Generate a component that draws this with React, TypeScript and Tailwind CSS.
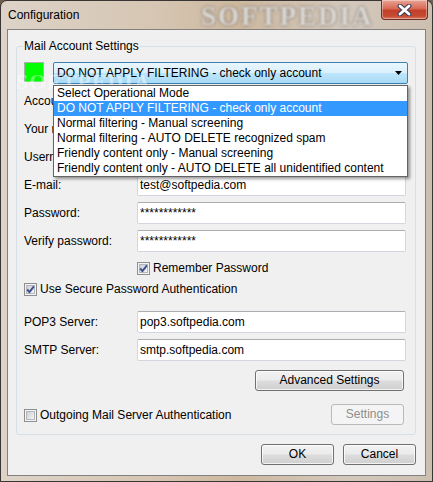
import React from "react";

const MODES = [
  "Select Operational Mode",
  "DO NOT APPLY FILTERING - check only account",
  "Normal filtering - Manual screening",
  "Normal filtering - AUTO DELETE recognized spam",
  "Friendly content only - Manual screening",
  "Friendly content only - AUTO DELETE all unidentified content",
];

const FIELDS = [
  { label: "Account name:", value: "" },
  { label: "Your name:", value: "" },
  { label: "Username:", value: "" },
  { label: "E-mail:", value: "test@softpedia.com" },
  { label: "Password:", value: "************" },
  { label: "Verify password:", value: "************" },
];

function CheckBox({ checked }: { checked?: boolean }) {
  return (
    <svg width="13" height="13" viewBox="0 0 13 13" className="shrink-0">
      <defs>
        <linearGradient id="cbfill" x1="0" y1="0" x2="1" y2="1">
          <stop offset="0" stopColor="#c9cdd3" />
          <stop offset="1" stopColor="#f6f6f6" />
        </linearGradient>
      </defs>
      <rect x="0.5" y="0.5" width="12" height="12" fill="#f4f4f4" stroke="#8e8f8f" />
      <rect x="2.5" y="2.5" width="8" height="8" fill="url(#cbfill)" stroke="#b3b7bd" />
      {checked && (
        <path
          d="M3.2 6.4 L5.4 9.2 L9.9 3.3"
          fill="none"
          stroke="#3c508c"
          strokeWidth="1.9"
          strokeLinejoin="round"
        />
      )}
    </svg>
  );
}

function TextBox({ value }: { value?: string }) {
  return (
    <div className="h-[22px] w-[269px] rounded-[2px] border border-[#d3d6dc] border-t-[#abadb3] bg-white pl-[2px] leading-[20px]">
      {value}
    </div>
  );
}

function Button({
  children,
  className = "",
  disabled,
}: {
  children: React.ReactNode;
  className?: string;
  disabled?: boolean;
}) {
  return (
    <div
      className={`flex h-[21px] items-center justify-center rounded-[3px] border ${
        disabled
          ? "border-[#b7bbbe] bg-[#f4f4f4] text-[#8d8d8d]"
          : "border-[#707070] bg-[linear-gradient(#f2f2f2_0%,#ebebeb_48%,#dddddd_52%,#cfcfcf_100%)] shadow-[inset_0_0_0_1px_rgba(255,255,255,0.75)]"
      } ${className}`}
    >
      {children}
    </div>
  );
}

function CloseButton() {
  return (
    <div className="absolute right-[-2px] top-[-1px] flex h-[20px] w-[47px] items-center justify-center rounded-b-[4px] border border-t-0 border-[#6a3029] bg-[linear-gradient(#e9a597_0%,#d86a53_45%,#c3402a_55%,#c64a33_85%,#dd7a5e_100%)] shadow-[inset_0_0_0_1px_rgba(255,255,255,0.35)]">
      <svg width="15" height="12" viewBox="0 0 15 12">
        <path d="M3 2 L12 10 M12 2 L3 10" stroke="#3a3f5a" strokeWidth="4.8" strokeLinecap="round" />
        <path d="M3 2 L12 10 M12 2 L3 10" stroke="#ffffff" strokeWidth="2.8" strokeLinecap="round" />
      </svg>
    </div>
  );
}

export default function App() {
  return (
    <div className="h-[482px] w-[433px] overflow-hidden bg-[#6e5d50] font-['Liberation_Sans',Arial,sans-serif] text-[12px] leading-[15px] text-black">
      <div className="flex h-full flex-col rounded-t-[7px] border border-[#3a3634] bg-[linear-gradient(to_right,#ddd3c8_0%,#d6c6b3_35%,#cdb89f_55%,#d3c8bc_80%,#cdbfb0_100%)] px-[6px] pb-[5px]">
        {/* title bar */}
        <div className="relative flex h-[28px] shrink-0 items-center pl-[1px]">
          <span className="relative z-10">Configuration</span>
          <span className="pointer-events-none absolute left-[194px] top-[1px] font-['Liberation_Serif',serif] text-[27px] font-bold leading-[28px] tracking-[2px] text-[#eeebe7]/85 blur-[1px] [text-shadow:0_0_3px_rgba(70,70,70,0.9)]">
            SOFTPEDIA
          </span>
          <CloseButton />
        </div>

        {/* client area */}
        <div className="relative flex flex-1 flex-col border border-[#83817f] bg-[#f0f0f0]">
          <fieldset className="ml-[8px] mr-[9px] mt-[9px] rounded-[3px] border border-[#d5dfe5] px-[7px] pb-[9px] pt-[8px]">
            <legend className="-ml-[1px] px-[1px] leading-[15px]">Mail Account Settings</legend>

            <div className="flex items-start gap-[9px]">
              <div className="h-[20px] w-[20px] shrink-0 border border-[#a9b0a9] border-b-[#6fe36f] border-r-[#6fe36f] bg-[#00ff00]" />
              <div className="relative">
                <div className="flex h-[22px] w-[355px] items-center rounded-[2px] border border-[#3c7fb1] bg-[linear-gradient(#eaf6fd_0%,#d9f0fc_48%,#bee6fd_52%,#a7d9f5_100%)] pl-[3px] pr-[5px]">
                  <span className="flex-1">DO NOT APPLY FILTERING - check only account</span>
                  <svg width="7" height="4" viewBox="0 0 7 4">
                    <path d="M0 0 H7 L3.5 4 Z" fill="#000" />
                  </svg>
                </div>
                {/* open drop-down list */}
                <ul className="absolute left-0 top-[23px] z-20 w-[355px] border border-[#646464] bg-white shadow-[2px_2px_3px_rgba(0,0,0,0.4)]">
                  {MODES.map((m, i) => (
                    <li
                      key={m}
                      className={`h-[15px] pl-[3px] leading-[15px] ${
                        i === 1 ? "bg-[#3399ff] text-white" : ""
                      }`}
                    >
                      {m}
                    </li>
                  ))}
                </ul>
              </div>
            </div>

            <div className="mt-[6px] flex flex-col gap-[6px]">
              {FIELDS.map((f) => (
                <div key={f.label} className="flex h-[22px] items-center">
                  <span className="w-[113px] shrink-0 whitespace-nowrap">{f.label}</span>
                  <TextBox value={f.value} />
                </div>
              ))}
            </div>

            <div className="mt-[8px] flex h-[16px] items-center gap-[3px] pl-[113px]">
              <CheckBox checked />
              <span>Remember Password</span>
            </div>

            <div className="mt-[5px] flex h-[16px] items-center gap-[3px]">
              <CheckBox checked />
              <span>Use Secure Password Authentication</span>
            </div>

            <div className="mt-[14px] flex h-[22px] items-center">
              <span className="w-[113px] shrink-0">POP3 Server:</span>
              <TextBox value="pop3.softpedia.com" />
            </div>
            <div className="mt-[6px] flex h-[22px] items-center">
              <span className="w-[113px] shrink-0">SMTP Server:</span>
              <TextBox value="smtp.softpedia.com" />
            </div>

            <Button className="ml-[231px] mt-[9px] w-[149px]">Advanced Settings</Button>

            <div className="mt-[12px] flex h-[22px] items-center">
              <div className="flex items-center gap-[3px] pt-[2px]">
                <CheckBox />
                <span>Outgoing Mail Server Authentication</span>
              </div>
              <Button disabled className="ml-auto mr-[4px] w-[73px]">
                Settings
              </Button>
            </div>
          </fieldset>

          <div className="mr-[9px] mt-[9px] flex justify-end gap-[9px]">
            <Button className="w-[73px]">OK</Button>
            <Button className="w-[73px]">Cancel</Button>
          </div>

          {/* watermark */}
          <span className="pointer-events-none absolute left-[8px] top-[44px] font-['Liberation_Serif',serif] text-[22px] font-bold tracking-[1px] text-white/40 blur-[0.6px]">
            SOFTPEDIA
          </span>
        </div>
      </div>
    </div>
  );
}
